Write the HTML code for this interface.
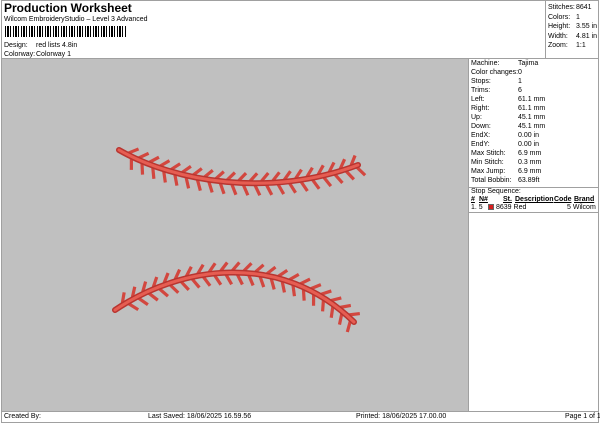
<!DOCTYPE html>
<html><head><meta charset="utf-8"><style>
*{margin:0;padding:0;box-sizing:border-box}
body{width:600px;height:424px;background:#fff;font-family:"Liberation Sans",Arial,sans-serif;font-size:7px;color:#000;position:relative;overflow:hidden}
.a{position:absolute;white-space:nowrap}
.ln{position:absolute;background:#a0a0a0}
</style></head><body>
<div class="a" style="left:4px;top:1px;font-size:12px;font-weight:bold">Production Worksheet</div>
<div class="a" style="left:4px;top:16px">Wilcom EmbroideryStudio – Level 3 Advanced</div>
<div class="a" style="left:5px;top:26px;width:121px;height:11px;background:repeating-linear-gradient(90deg,#000 0 1px,#fff 1px 2px,#000 2px 4px,#fff 4px 5px,#000 5px 6px,#fff 6px 8px)"></div>
<div class="a" style="left:4px;top:42px">Design:</div><div class="a" style="left:36px;top:42px">red lists 4.8in</div>
<div class="a" style="left:4px;top:51px">Colorway:</div><div class="a" style="left:36px;top:51px">Colorway 1</div>
<div class="ln" style="left:1px;top:0;width:1px;height:423px"></div>
<div class="ln" style="left:598px;top:0;width:1px;height:423px"></div>
<div class="ln" style="left:1px;top:0;width:598px;height:1px"></div>
<div class="ln" style="left:545px;top:0;width:1px;height:58px"></div>
<div class="ln" style="left:1px;top:58px;width:598px;height:1px"></div>
<div style="position:absolute;left:2px;top:59px;width:466px;height:352px;background:#c0c0c0"></div>
<div class="ln" style="left:468px;top:58px;width:1px;height:353px"></div>
<div class="ln" style="left:1px;top:411px;width:598px;height:1px"></div>
<div class="ln" style="left:1px;top:422px;width:598px;height:1px"></div>
<div class="ln" style="left:469px;top:212px;width:130px;height:1px"></div>
<div class="ln" style="left:469px;top:187px;width:130px;height:1px"></div>
<div class="a" style="left:548px;top:3px;line-height:9.5px">Stitches:<br>Colors:<br>Height:<br>Width:<br>Zoom:</div>
<div class="a" style="left:576px;top:3px;line-height:9.5px">8641<br>1<br>3.55 in<br>4.81 in<br>1:1</div>
<div class="a" style="left:471px;top:59px;line-height:9px">Machine:<br>Color changes:<br>Stops:<br>Trims:<br>Left:<br>Right:<br>Up:<br>Down:<br>EndX:<br>EndY:<br>Max Stitch:<br>Min Stitch:<br>Max Jump:<br>Total Bobbin:</div>
<div class="a" style="left:518px;top:59px;line-height:9px">Tajima<br>0<br>1<br>6<br>61.1 mm<br>61.1 mm<br>45.1 mm<br>45.1 mm<br>0.00 in<br>0.00 in<br>6.9 mm<br>0.3 mm<br>6.9 mm<br>63.89ft</div>
<div class="a" style="left:471px;top:188px">Stop Sequence:</div>
<div class="a" style="left:471px;top:196px;font-weight:bold;text-decoration:underline">#</div>
<div class="a" style="left:479px;top:196px;font-weight:bold;text-decoration:underline">N#</div>
<div class="a" style="left:503px;top:196px;font-weight:bold;text-decoration:underline">St.</div>
<div class="a" style="left:515px;top:196px;font-weight:bold;text-decoration:underline">Description</div>
<div class="a" style="left:554px;top:196px;font-weight:bold;text-decoration:underline">Code</div>
<div class="a" style="left:574px;top:196px;font-weight:bold;text-decoration:underline">Brand</div>
<div class="a" style="left:471px;top:204px">1. 5</div>
<div class="a" style="left:488px;top:204px;width:6px;height:6px;background:#d81e1e;border:1px solid #666"></div>
<div class="a" style="left:496px;top:204px">8639 Red</div>
<div class="a" style="left:567px;top:204px">5 Wilcom</div>
<div class="a" style="left:4px;top:413px">Created By:</div>
<div class="a" style="left:148px;top:413px">Last Saved: 18/06/2025 16.59.56</div>
<div class="a" style="left:356px;top:413px">Printed: 18/06/2025 17.00.00</div>
<div class="a" style="left:565px;top:413px">Page 1 of 1</div>
<svg id="s" width="600" height="424" style="position:absolute;left:0;top:0">
<g id="t" stroke="#d2473f" stroke-width="3.2" stroke-linecap="butt" fill="none"></g>
<path id="p1" d="M119 150 C175 182 270 198 358 165" stroke="#b83530" stroke-width="6" fill="none" stroke-linecap="round"/>
<path d="M119 150 C175 182 270 198 358 165" stroke="#e65d52" stroke-width="3" fill="none" stroke-linecap="round"/>
<path id="p2" d="M115 310 C180 266 280 250 354 322" stroke="#b83530" stroke-width="6" fill="none" stroke-linecap="round"/>
<path d="M115 310 C180 266 280 250 354 322" stroke="#e65d52" stroke-width="3" fill="none" stroke-linecap="round"/>
</svg>
<script>
var g=document.getElementById('t'),NS='http://www.w3.org/2000/svg';
function ln(a,b,c,d){var l=document.createElementNS(NS,'line');l.setAttribute('x1',a);l.setAttribute('y1',b);l.setAttribute('x2',c);l.setAttribute('y2',d);g.appendChild(l);}
['p1','p2'].forEach(function(id){var p=document.getElementById(id),L=p.getTotalLength();
for(var s=10;s<L-6;s+=11.5){var a=p.getPointAtLength(s),b=p.getPointAtLength(s+1);var tx=b.x-a.x,ty=b.y-a.y,m=Math.hypot(tx,ty);tx/=m;ty/=m;var nx=ty,ny=-tx;
ln(a.x+nx*2,a.y+ny*2,a.x+nx*10+tx*7,a.y+ny*10+ty*7);
var c=p.getPointAtLength(s+5);ln(c.x-nx*2,c.y-ny*2,c.x-nx*12+tx*5,c.y-ny*12+ty*5);}});
</script>
</body></html>
